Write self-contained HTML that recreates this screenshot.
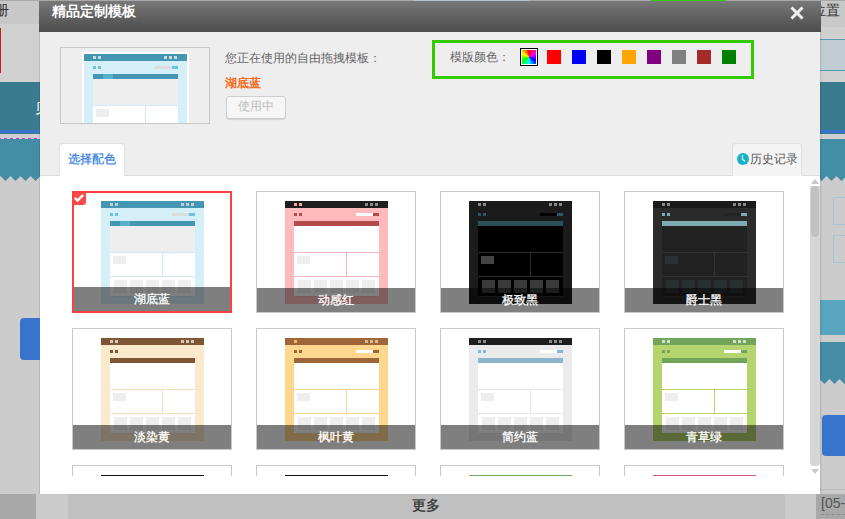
<!DOCTYPE html>
<html><head><meta charset="utf-8">
<style>
*{margin:0;padding:0;box-sizing:border-box}
html,body{width:845px;height:519px;overflow:hidden;background:#cccccc;font-family:"Liberation Sans",sans-serif;position:relative}
.a{position:absolute}
.tpl{position:absolute;width:103px;height:103px;overflow:hidden}
.tpl div{position:absolute}
.card{position:absolute;width:160px;height:122px;border:1px solid #c8c8c8;background:#fff;overflow:hidden}
.card.sel{border:2px solid #fb4242}
.card .lbl{position:absolute;left:0;right:0;bottom:0;height:24px;background:rgba(0,0,0,0.5);color:#fff;font-size:12px;text-align:center;line-height:24px;-webkit-text-stroke:0.3px #fff}
.badge{position:absolute;left:-2px;top:-2px;width:14px;height:14px;background:#fc4a4a;border-radius:3px}
.badge svg{position:absolute;left:0;top:0}
</style></head>
<body>
<!-- background page -->
<div class="a" style="left:0;top:0;width:845px;height:1px;background:#a8a8a8"></div>
<div class="a" style="left:0;top:1px;width:845px;height:81px;background:#d0d0d0"></div>
<div class="a" style="left:0;top:1px;width:40px;height:23px;background:#c8c8c8"></div>
<div class="a" style="left:820px;top:1px;width:25px;height:26px;background:#c8c8c8"></div>
<div class="a" style="left:0;top:28px;width:1px;height:45px;background:#c41c1c"></div>
<div class="a" style="left:-5px;top:3px;font-size:14px;line-height:14px;color:#333">册</div>
<div class="a" style="left:0;top:82px;width:845px;height:52px;background:#3a7b8f"></div>
<div class="a" style="left:0;top:130px;width:845px;height:3px;background:#3874cc"></div>
<div class="a" style="left:0;top:134px;width:845px;height:5px;background:#d0d0d0"></div>
<div class="a" style="left:0;top:139px;width:845px;height:37px;background:#448da6"></div>
<div class="a" style="left:0;top:138px;width:40px;height:1px;background:repeating-linear-gradient(90deg,#d030d8 0,#d030d8 1px,#dcdcdc 1px,#dcdcdc 4px,#d030d8 4px,#d030d8 6px)"></div>
<div class="a" style="left:35px;top:101px;font-size:14px;line-height:14px;color:#fff">贝</div>
<svg class="a" style="left:0;top:176px;overflow:visible" width="40" height="6"><path d="M-20 -1 L-19.5 0 L-14.5 5 L-9.5 0 L-4.5 5 L0.5 0 L5.5 5 L10.5 0 L15.5 5 L20.5 0 L25.5 5 L30.5 0 L35.5 5 L40.5 0 L45.5 5 L50.5 0 L55.5 5 L60 -1 Z" fill="#448da6"/></svg>
<svg class="a" style="left:820px;top:176px;overflow:visible" width="25" height="6"><path d="M-20 -1 L-13.5 0 L-8.5 5 L-3.5 0 L1.5 5 L6.5 0 L11.5 5 L16.5 0 L21.5 5 L26.5 0 L31.5 5 L36.5 0 L41.5 5 L45 -1 Z" fill="#448da6"/></svg>
<div class="a" style="left:39px;top:32px;width:1px;height:462px;background:rgba(0,0,0,0.1)"></div>
<div class="a" style="left:20px;top:318px;width:30px;height:42px;background:#3874cc;border-radius:4px"></div>

<!-- right side bg -->


<div class="a" style="left:820px;top:39px;width:25px;height:1px;background:#5a9ab0"></div>
<div class="a" style="left:820px;top:40px;width:25px;height:30px;background:#c2ccd3"></div>
<div class="a" style="left:820px;top:70px;width:25px;height:1px;background:#5a9ab0"></div>
<div class="a" style="left:812px;top:3px;font-size:14px;line-height:14px;color:#333;white-space:nowrap">位置</div>
<div class="a" style="left:833px;top:197px;width:20px;height:28px;border:1px solid #a6c6d6"></div>
<div class="a" style="left:833px;top:235px;width:20px;height:28px;border:1px solid #a6c6d6"></div>
<div class="a" style="left:820px;top:300px;width:25px;height:35px;background:#5aa5c0"></div>
<div class="a" style="left:820px;top:342px;width:25px;height:37px;background:#448da5"></div>
<svg class="a" style="left:820px;top:379px;overflow:visible" width="25" height="6"><path d="M-20 -1 L-20.5 0 L-15.5 5 L-10.5 0 L-5.5 5 L-0.5 0 L4.5 5 L9.5 0 L14.5 5 L19.5 0 L24.5 5 L29.5 0 L34.5 5 L39.5 0 L44.5 5 L45 -1 Z" fill="#448da5"/></svg>
<div class="a" style="left:822px;top:415px;width:30px;height:41px;background:#3874cc;border-radius:4px"></div>
<div class="a" style="left:820px;top:489px;width:25px;height:1px;background:#b8b8b8"></div>

<div class="a" style="left:820px;top:32px;width:2px;height:462px;background:linear-gradient(90deg,rgba(0,0,0,0.1),rgba(0,0,0,0.04))"></div>
<!-- top strip -->
<div class="a" style="left:413px;top:0;width:116px;height:1px;background:#b4c0cc"></div>
<div class="a" style="left:651px;top:0;width:75px;height:1px;background:#33cc11"></div>

<!-- dialog -->
<div class="a" style="left:39px;top:1px;width:782px;height:31px;background:linear-gradient(#787878,#4c4c4c)"></div>
<div class="a" style="left:52px;top:1px;color:#fff;font-weight:bold;font-size:14px;line-height:20px">精品定制模板</div>
<svg class="a" style="left:790px;top:6px" width="14" height="14" viewBox="0 0 14 14"><path d="M1.5 1.5 L12.5 12.5 M12.5 1.5 L1.5 12.5" stroke="#f0f0f0" stroke-width="3"/></svg>
<div class="a" style="left:40px;top:32px;width:780px;height:144px;background:#eeeeee"></div>

<!-- current template preview -->
<div class="a" style="left:60px;top:47px;width:150px;height:77px;border:1px solid #c6c6c6;background:#eeeeee;overflow:hidden">
  <div class="a" style="left:21px;top:4px;width:107px;height:80px;background:#fff"></div>
  <div class="a" style="left:23px;top:6px;width:103px;height:80px;background:#d5eff9">
    <div class="a" style="left:0;top:0;width:103px;height:7px;background:#4596b3"></div>
    <div class="a" style="left:9px;top:2px;width:3px;height:3px;background:#c5dbe3"></div>
    <div class="a" style="left:14px;top:2px;width:3px;height:3px;background:#c5dbe3"></div>
    <div class="a" style="left:80px;top:2px;width:3px;height:3px;background:#c5dbe3"></div>
    <div class="a" style="left:85px;top:2px;width:3px;height:3px;background:#c5dbe3"></div>
    <div class="a" style="left:90px;top:2px;width:3px;height:3px;background:#c5dbe3"></div>
    <div class="a" style="left:9px;top:12px;width:3px;height:3px;background:#6cc2e2"></div>
    <div class="a" style="left:14px;top:12px;width:3px;height:3px;background:#6cc2e2"></div>
    <div class="a" style="left:71px;top:12px;width:17px;height:3px;background:#dcdcdc"></div>
    <div class="a" style="left:88px;top:12px;width:6px;height:3px;background:#6cc2e2"></div>
    <div class="a" style="left:9px;top:20px;width:85px;height:5px;background:#4596b3"></div>
    <div class="a" style="left:19px;top:20px;width:10px;height:5px;background:#58b0cc"></div>
    <div class="a" style="left:9px;top:25px;width:85px;height:60px;background:#cdeaf7"></div>
    <div class="a" style="left:9px;top:25px;width:85px;height:26px;background:#eeeeee"></div>
    <div class="a" style="left:9px;top:52px;width:52px;height:30px;background:#fff"></div>
    <div class="a" style="left:62px;top:52px;width:32px;height:30px;background:#fff"></div>
    <div class="a" style="left:12px;top:55px;width:13px;height:8px;background:#eeeeee"></div>
  </div>
</div>
<div class="a" style="left:225px;top:50px;font-size:12px;line-height:16px;color:#666">您正在使用的自由拖拽模板：</div>
<div class="a" style="left:225px;top:75px;font-size:12px;line-height:16px;color:#f86a1a;font-weight:bold">湖底蓝</div>
<div class="a" style="left:226px;top:96px;width:60px;height:23px;border:1px solid #cfcfcf;border-radius:3px;background:#f6f6f6;box-shadow:0 1px 1px rgba(0,0,0,0.12);font-size:12px;line-height:19px;text-align:center;color:#bdbdbd">使用中</div>

<!-- color picker -->
<div class="a" style="left:432px;top:40px;width:322px;height:39px;border:3px solid #33cc00"></div>
<div class="a" style="left:450px;top:49px;font-size:12px;line-height:16px;color:#666">模版颜色：</div>
<div class="a" style="left:520px;top:48px;width:18px;height:18px;border:1px solid #000;background:#fff;padding:1px">
  <div style="width:14px;height:14px;background:conic-gradient(from 0deg,#f00,#f0f,#00f,#0ff,#0f0,#ff0,#f00)"></div>
</div>
<div class="a" style="left:547px;top:50px;width:14px;height:14px;background:#ff0000"></div><div class="a" style="left:572px;top:50px;width:14px;height:14px;background:#0000ff"></div><div class="a" style="left:597px;top:50px;width:14px;height:14px;background:#000000"></div><div class="a" style="left:622px;top:50px;width:14px;height:14px;background:#ffa500"></div><div class="a" style="left:647px;top:50px;width:14px;height:14px;background:#800080"></div><div class="a" style="left:672px;top:50px;width:14px;height:14px;background:#808080"></div><div class="a" style="left:697px;top:50px;width:14px;height:14px;background:#a52a2a"></div><div class="a" style="left:722px;top:50px;width:14px;height:14px;background:#008000"></div>

<!-- tabs -->
<div class="a" style="left:40px;top:175px;width:780px;height:1px;background:#dddddd"></div>
<div class="a" style="left:59px;top:143px;width:66px;height:34px;border:1px solid #e2e2e2;border-bottom:none;border-radius:4px 4px 0 0;background:#fff;font-size:12px;line-height:16px;color:#2b7be0;padding:7px 0 0 8px;-webkit-text-stroke:0.2px #2b7be0">选择配色</div>
<div class="a" style="left:732px;top:143px;width:70px;height:33px;border:1px solid #e2e2e2;border-bottom:none;border-radius:4px 4px 0 0;background:#f4f4f4;font-size:12px;line-height:16px;color:#555;padding:7px 0 0 17px">历史记录</div>
<svg class="a" style="left:737px;top:153px" width="12" height="12" viewBox="0 0 12 12"><circle cx="6" cy="6" r="6" fill="#18b2c8"/><path d="M5.5 2.2 V6.5 L8 8.3" stroke="#fff" stroke-width="1.1" fill="none"/></svg>

<!-- body white -->
<div class="a" style="left:40px;top:176px;width:780px;height:318px;background:#ffffff"></div>
<div class="a" style="left:40px;top:176px;width:770px;height:300px;overflow:hidden">
  <div class="a" style="left:-40px;top:-176px;width:845px;height:700px">
<div class="card sel" style="left:72px;top:191px"><div class="tpl" style="left:27px;top:8px;background:#d5eff9"><div style="left:0;top:0;width:103px;height:7px;background:#4596b3"></div><div style="left:9px;top:2px;width:3px;height:3px;background:#b9ced6"></div><div style="left:14px;top:2px;width:3px;height:3px;background:#b9ced6"></div><div style="left:80px;top:2px;width:3px;height:3px;background:#b9ced6"></div><div style="left:85px;top:2px;width:3px;height:3px;background:#b9ced6"></div><div style="left:90px;top:2px;width:3px;height:3px;background:#b9ced6"></div><div style="left:9px;top:12px;width:3px;height:3px;background:#6cc2e2"></div><div style="left:14px;top:12px;width:3px;height:3px;background:#6cc2e2"></div><div style="left:71px;top:12px;width:17px;height:3px;background:#dcdcdc"></div><div style="left:88px;top:12px;width:6px;height:3px;background:#6cc2e2"></div><div style="left:9px;top:20px;width:85px;height:5px;background:#4596b3"></div><div style="left:19px;top:20px;width:10px;height:5px;background:#58b0cc"></div><div style="left:9px;top:25px;width:85px;height:71px;background:#cdeaf7"></div><div style="left:9px;top:25px;width:85px;height:26px;background:#eeeeee"></div><div style="left:9px;top:52px;width:52px;height:23px;background:#ffffff"></div><div style="left:62px;top:52px;width:32px;height:23px;background:#ffffff"></div><div style="left:12px;top:55px;width:13px;height:8px;background:#eeeeee"></div><div style="left:9px;top:76px;width:85px;height:19px;background:#ffffff"></div><div style="left:13px;top:79px;width:13px;height:13px;background:#eeeeee"></div><div style="left:29px;top:79px;width:13px;height:13px;background:#eeeeee"></div><div style="left:45px;top:79px;width:13px;height:13px;background:#eeeeee"></div><div style="left:61px;top:79px;width:13px;height:13px;background:#eeeeee"></div><div style="left:77px;top:79px;width:13px;height:13px;background:#eeeeee"></div></div><div class="lbl" style="top:94px">湖底蓝</div><div class="badge"><svg width="14" height="14" viewBox="0 0 14 14"><path d="M2.8 6.8 L5.5 9.5 L11.2 3.8" stroke="#fff" stroke-width="2.4" fill="none"/></svg></div></div><div class="card" style="left:256px;top:191px"><div class="tpl" style="left:28px;top:9px;background:#ffbbbb"><div style="left:0;top:0;width:103px;height:7px;background:#1e1e1e"></div><div style="left:9px;top:2px;width:3px;height:3px;background:#f4a8a8"></div><div style="left:14px;top:2px;width:3px;height:3px;background:#f4a8a8"></div><div style="left:80px;top:2px;width:3px;height:3px;background:#8a8a8a"></div><div style="left:85px;top:2px;width:3px;height:3px;background:#8a8a8a"></div><div style="left:90px;top:2px;width:3px;height:3px;background:#8a8a8a"></div><div style="left:9px;top:12px;width:3px;height:3px;background:#b54a4a"></div><div style="left:14px;top:12px;width:3px;height:3px;background:#b54a4a"></div><div style="left:71px;top:12px;width:17px;height:3px;background:#ffffff"></div><div style="left:88px;top:12px;width:6px;height:3px;background:#b54a4a"></div><div style="left:9px;top:20px;width:85px;height:5px;background:#b54a4a"></div><div style="left:9px;top:25px;width:85px;height:71px;background:#f8b4b4"></div><div style="left:9px;top:25px;width:85px;height:26px;background:#ffffff"></div><div style="left:9px;top:52px;width:52px;height:23px;background:#ffffff"></div><div style="left:62px;top:52px;width:32px;height:23px;background:#ffffff"></div><div style="left:12px;top:55px;width:13px;height:8px;background:#eeeeee"></div><div style="left:9px;top:76px;width:85px;height:19px;background:#ffffff"></div><div style="left:13px;top:79px;width:13px;height:13px;background:#eeeeee"></div><div style="left:29px;top:79px;width:13px;height:13px;background:#eeeeee"></div><div style="left:45px;top:79px;width:13px;height:13px;background:#eeeeee"></div><div style="left:61px;top:79px;width:13px;height:13px;background:#eeeeee"></div><div style="left:77px;top:79px;width:13px;height:13px;background:#eeeeee"></div></div><div class="lbl">动感红</div></div><div class="card" style="left:440px;top:191px"><div class="tpl" style="left:28px;top:9px;background:#1b1b1b"><div style="left:0;top:0;width:103px;height:7px;background:#1b1b1b"></div><div style="left:9px;top:2px;width:3px;height:3px;background:#8a8a8a"></div><div style="left:14px;top:2px;width:3px;height:3px;background:#8a8a8a"></div><div style="left:80px;top:2px;width:3px;height:3px;background:#8a8a8a"></div><div style="left:85px;top:2px;width:3px;height:3px;background:#8a8a8a"></div><div style="left:90px;top:2px;width:3px;height:3px;background:#8a8a8a"></div><div style="left:9px;top:12px;width:3px;height:3px;background:#2d5863"></div><div style="left:14px;top:12px;width:3px;height:3px;background:#2d5863"></div><div style="left:71px;top:12px;width:17px;height:3px;background:#000000"></div><div style="left:88px;top:12px;width:6px;height:3px;background:#2d5863"></div><div style="left:9px;top:20px;width:85px;height:5px;background:#2d5058"></div><div style="left:9px;top:25px;width:85px;height:71px;background:#2a2a2a"></div><div style="left:9px;top:25px;width:85px;height:26px;background:#000000"></div><div style="left:9px;top:52px;width:52px;height:23px;background:#000000"></div><div style="left:62px;top:52px;width:32px;height:23px;background:#000000"></div><div style="left:12px;top:55px;width:13px;height:8px;background:#444444"></div><div style="left:9px;top:76px;width:85px;height:19px;background:#000000"></div><div style="left:13px;top:79px;width:13px;height:13px;background:#3a3a3a"></div><div style="left:29px;top:79px;width:13px;height:13px;background:#3a3a3a"></div><div style="left:45px;top:79px;width:13px;height:13px;background:#3a3a3a"></div><div style="left:61px;top:79px;width:13px;height:13px;background:#3a3a3a"></div><div style="left:77px;top:79px;width:13px;height:13px;background:#3a3a3a"></div></div><div class="lbl">极致黑</div></div><div class="card" style="left:624px;top:191px"><div class="tpl" style="left:28px;top:9px;background:#2b2b2b"><div style="left:0;top:0;width:103px;height:7px;background:#1b1b1b"></div><div style="left:9px;top:2px;width:3px;height:3px;background:#8a8a8a"></div><div style="left:14px;top:2px;width:3px;height:3px;background:#8a8a8a"></div><div style="left:80px;top:2px;width:3px;height:3px;background:#8a8a8a"></div><div style="left:85px;top:2px;width:3px;height:3px;background:#8a8a8a"></div><div style="left:90px;top:2px;width:3px;height:3px;background:#8a8a8a"></div><div style="left:9px;top:12px;width:3px;height:3px;background:#7eaab2"></div><div style="left:14px;top:12px;width:3px;height:3px;background:#7eaab2"></div><div style="left:71px;top:12px;width:17px;height:3px;background:#232323"></div><div style="left:88px;top:12px;width:6px;height:3px;background:#7eaab2"></div><div style="left:9px;top:20px;width:85px;height:5px;background:#7eaab2"></div><div style="left:9px;top:25px;width:85px;height:71px;background:#333333"></div><div style="left:9px;top:25px;width:85px;height:26px;background:#222222"></div><div style="left:9px;top:52px;width:52px;height:23px;background:#222222"></div><div style="left:62px;top:52px;width:32px;height:23px;background:#222222"></div><div style="left:12px;top:55px;width:13px;height:8px;background:#283333"></div><div style="left:9px;top:76px;width:85px;height:19px;background:#222222"></div><div style="left:13px;top:79px;width:13px;height:13px;background:#283030"></div><div style="left:29px;top:79px;width:13px;height:13px;background:#283030"></div><div style="left:45px;top:79px;width:13px;height:13px;background:#283030"></div><div style="left:61px;top:79px;width:13px;height:13px;background:#283030"></div><div style="left:77px;top:79px;width:13px;height:13px;background:#283030"></div></div><div class="lbl">爵士黑</div></div><div class="card" style="left:72px;top:328px"><div class="tpl" style="left:28px;top:9px;background:#fbe9cb"><div style="left:0;top:0;width:103px;height:7px;background:#7e5535"></div><div style="left:9px;top:2px;width:3px;height:3px;background:#d8c8b8"></div><div style="left:14px;top:2px;width:3px;height:3px;background:#d8c8b8"></div><div style="left:80px;top:2px;width:3px;height:3px;background:#d8c8b8"></div><div style="left:85px;top:2px;width:3px;height:3px;background:#d8c8b8"></div><div style="left:90px;top:2px;width:3px;height:3px;background:#d8c8b8"></div><div style="left:9px;top:12px;width:3px;height:3px;background:#7e5535"></div><div style="left:14px;top:12px;width:3px;height:3px;background:#7e5535"></div><div style="left:9px;top:20px;width:85px;height:5px;background:#7e5535"></div><div style="left:9px;top:25px;width:85px;height:71px;background:#f6e0bc"></div><div style="left:9px;top:25px;width:85px;height:26px;background:#ffffff"></div><div style="left:9px;top:52px;width:52px;height:23px;background:#ffffff"></div><div style="left:62px;top:52px;width:32px;height:23px;background:#ffffff"></div><div style="left:12px;top:55px;width:13px;height:8px;background:#eeeeee"></div><div style="left:9px;top:76px;width:85px;height:19px;background:#ffffff"></div><div style="left:13px;top:79px;width:13px;height:13px;background:#eeeeee"></div><div style="left:29px;top:79px;width:13px;height:13px;background:#eeeeee"></div><div style="left:45px;top:79px;width:13px;height:13px;background:#eeeeee"></div><div style="left:61px;top:79px;width:13px;height:13px;background:#eeeeee"></div><div style="left:77px;top:79px;width:13px;height:13px;background:#eeeeee"></div></div><div class="lbl">淡染黄</div></div><div class="card" style="left:256px;top:328px"><div class="tpl" style="left:28px;top:9px;background:#fed78f"><div style="left:0;top:0;width:103px;height:7px;background:#9e6539"></div><div style="left:9px;top:2px;width:3px;height:3px;background:#f4b860"></div><div style="left:80px;top:2px;width:3px;height:3px;background:#dcb894"></div><div style="left:85px;top:2px;width:3px;height:3px;background:#dcb894"></div><div style="left:90px;top:2px;width:3px;height:3px;background:#dcb894"></div><div style="left:9px;top:12px;width:3px;height:3px;background:#9e6539"></div><div style="left:14px;top:12px;width:3px;height:3px;background:#9e6539"></div><div style="left:71px;top:12px;width:17px;height:3px;background:#ffffff"></div><div style="left:88px;top:12px;width:6px;height:3px;background:#9e6539"></div><div style="left:9px;top:20px;width:85px;height:5px;background:#9e6539"></div><div style="left:9px;top:25px;width:85px;height:71px;background:#fdd490"></div><div style="left:9px;top:25px;width:85px;height:26px;background:#ffffff"></div><div style="left:9px;top:52px;width:52px;height:23px;background:#ffffff"></div><div style="left:62px;top:52px;width:32px;height:23px;background:#ffffff"></div><div style="left:12px;top:55px;width:13px;height:8px;background:#eeeeee"></div><div style="left:9px;top:76px;width:85px;height:19px;background:#ffffff"></div><div style="left:13px;top:79px;width:13px;height:13px;background:#eeeeee"></div><div style="left:29px;top:79px;width:13px;height:13px;background:#eeeeee"></div><div style="left:45px;top:79px;width:13px;height:13px;background:#eeeeee"></div><div style="left:61px;top:79px;width:13px;height:13px;background:#eeeeee"></div><div style="left:77px;top:79px;width:13px;height:13px;background:#eeeeee"></div></div><div class="lbl">枫叶黄</div></div><div class="card" style="left:440px;top:328px"><div class="tpl" style="left:28px;top:9px;background:#ebebeb"><div style="left:0;top:0;width:103px;height:7px;background:#1e1e1e"></div><div style="left:9px;top:2px;width:3px;height:3px;background:#8a8a8a"></div><div style="left:14px;top:2px;width:3px;height:3px;background:#8a8a8a"></div><div style="left:80px;top:2px;width:3px;height:3px;background:#8a8a8a"></div><div style="left:85px;top:2px;width:3px;height:3px;background:#8a8a8a"></div><div style="left:90px;top:2px;width:3px;height:3px;background:#8a8a8a"></div><div style="left:9px;top:12px;width:3px;height:3px;background:#8cb5cd"></div><div style="left:14px;top:12px;width:3px;height:3px;background:#8cb5cd"></div><div style="left:71px;top:12px;width:17px;height:3px;background:#ffffff"></div><div style="left:88px;top:12px;width:6px;height:3px;background:#8cb5cd"></div><div style="left:9px;top:20px;width:85px;height:5px;background:#8cb5cd"></div><div style="left:9px;top:25px;width:85px;height:71px;background:#e8e8e8"></div><div style="left:9px;top:25px;width:85px;height:26px;background:#ffffff"></div><div style="left:9px;top:52px;width:52px;height:23px;background:#ffffff"></div><div style="left:62px;top:52px;width:32px;height:23px;background:#ffffff"></div><div style="left:12px;top:55px;width:13px;height:8px;background:#eeeeee"></div><div style="left:9px;top:76px;width:85px;height:19px;background:#ffffff"></div><div style="left:13px;top:79px;width:13px;height:13px;background:#eeeeee"></div><div style="left:29px;top:79px;width:13px;height:13px;background:#eeeeee"></div><div style="left:45px;top:79px;width:13px;height:13px;background:#eeeeee"></div><div style="left:61px;top:79px;width:13px;height:13px;background:#eeeeee"></div><div style="left:77px;top:79px;width:13px;height:13px;background:#eeeeee"></div></div><div class="lbl">简约蓝</div></div><div class="card" style="left:624px;top:328px"><div class="tpl" style="left:28px;top:9px;background:#b4d56e"><div style="left:0;top:0;width:103px;height:7px;background:#72a45a"></div><div style="left:9px;top:2px;width:3px;height:3px;background:#d0e4c4"></div><div style="left:14px;top:2px;width:3px;height:3px;background:#d0e4c4"></div><div style="left:80px;top:2px;width:3px;height:3px;background:#d0e4c4"></div><div style="left:85px;top:2px;width:3px;height:3px;background:#d0e4c4"></div><div style="left:90px;top:2px;width:3px;height:3px;background:#d0e4c4"></div><div style="left:9px;top:12px;width:3px;height:3px;background:#72a45a"></div><div style="left:14px;top:12px;width:3px;height:3px;background:#72a45a"></div><div style="left:71px;top:12px;width:17px;height:3px;background:#ffffff"></div><div style="left:88px;top:12px;width:6px;height:3px;background:#72a45a"></div><div style="left:9px;top:20px;width:85px;height:5px;background:#72a45a"></div><div style="left:9px;top:25px;width:85px;height:71px;background:#b4d56e"></div><div style="left:9px;top:25px;width:85px;height:26px;background:#ffffff"></div><div style="left:9px;top:52px;width:52px;height:23px;background:#ffffff"></div><div style="left:62px;top:52px;width:32px;height:23px;background:#ffffff"></div><div style="left:12px;top:55px;width:13px;height:8px;background:#eeeeee"></div><div style="left:9px;top:76px;width:85px;height:19px;background:#ffffff"></div><div style="left:13px;top:79px;width:13px;height:13px;background:#eeeeee"></div><div style="left:29px;top:79px;width:13px;height:13px;background:#eeeeee"></div><div style="left:45px;top:79px;width:13px;height:13px;background:#eeeeee"></div><div style="left:61px;top:79px;width:13px;height:13px;background:#eeeeee"></div><div style="left:77px;top:79px;width:13px;height:13px;background:#eeeeee"></div></div><div class="lbl">青草绿</div></div><div class="card" style="left:72px;top:465px"><div style="position:absolute;left:28px;top:9px;width:103px;height:7px;background:#111111"></div></div><div class="card" style="left:256px;top:465px"><div style="position:absolute;left:28px;top:9px;width:103px;height:7px;background:#111111"></div></div><div class="card" style="left:440px;top:465px"><div style="position:absolute;left:28px;top:9px;width:103px;height:7px;background:#72a45a"></div></div><div class="card" style="left:624px;top:465px"><div style="position:absolute;left:28px;top:9px;width:103px;height:7px;background:#d4508c"></div></div>
  </div>
</div>
<!-- scrollbar -->
<div class="a" style="left:810px;top:186px;width:10px;height:280px;background:#d6d6d6;border-radius:0 0 4px 4px"></div>
<div class="a" style="left:811px;top:186px;width:8px;height:51px;background:#c1c1c1;border-radius:4px"></div>
<svg class="a" style="left:810px;top:178px" width="10" height="7"><path d="M1 6 L5 1 L9 6 Z" fill="#c8c8c8"/></svg>
<svg class="a" style="left:810px;top:468px" width="10" height="7"><path d="M1 1 L9 1 L5 6 Z" fill="#c8c8c8"/></svg>

<!-- bottom bar -->
<div class="a" style="left:0;top:494px;width:845px;height:25px;background:#c0c0c0"></div>
<div class="a" style="left:0;top:494px;width:36px;height:25px;background:#a8a8a8"></div>
<div class="a" style="left:36px;top:494px;width:32px;height:25px;background:#cbcbcb"></div>
<div class="a" style="left:785px;top:494px;width:31px;height:25px;background:#cbcbcb"></div>
<div class="a" style="left:816px;top:494px;width:29px;height:25px;background:#a8a8a8"></div>
<div class="a" style="left:412px;top:496px;font-size:14px;line-height:18px;color:#333;-webkit-text-stroke:0.3px #333">更多</div>
<div class="a" style="left:821px;top:494px;font-size:14px;line-height:18px;color:#555">[05-</div>
<div class="a" style="left:821px;top:514px;width:24px;height:0;border-top:1px dashed #8a8a8a"></div>
</body></html>
